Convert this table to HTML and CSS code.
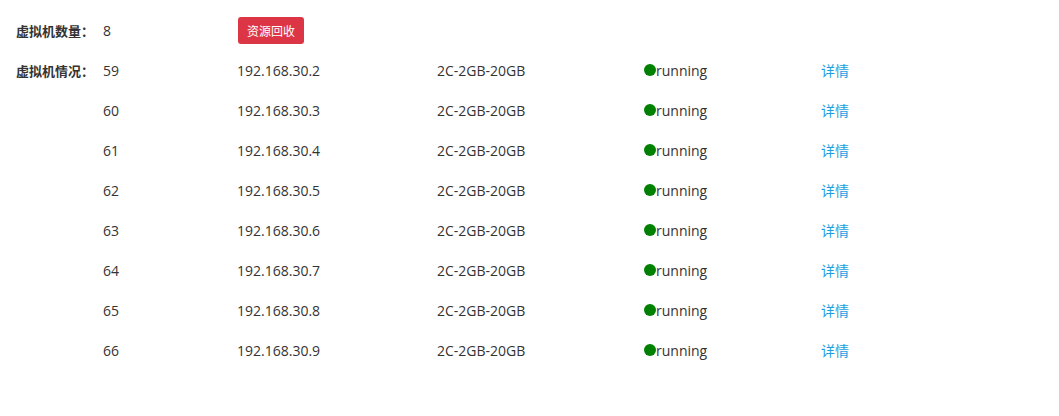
FILE: index.html
```html
<!DOCTYPE html>
<html lang="zh-CN">
<head>
  <meta charset="UTF-8">
  <title>虚拟机</title>
  <link rel="stylesheet" href="styles.css">
</head>
<body>
  <div class="vm-panel">
    <div class="vm-grid">
      <span class="label">虚拟机数量：</span>
      <span>8</span>
      <span class="span-rest"><button class="btn-reclaim">资源回收</button></span>

      <span class="label">虚拟机情况：</span>
      <span>59</span><span>192.168.30.2</span><span>2C-2GB-20GB</span>
      <span class="status"><i class="dot"></i>running</span><a href="#" class="detail">详情</a>

      <span></span>
      <span>60</span><span>192.168.30.3</span><span>2C-2GB-20GB</span>
      <span class="status"><i class="dot"></i>running</span><a href="#" class="detail">详情</a>

      <span></span>
      <span>61</span><span>192.168.30.4</span><span>2C-2GB-20GB</span>
      <span class="status"><i class="dot"></i>running</span><a href="#" class="detail">详情</a>

      <span></span>
      <span>62</span><span>192.168.30.5</span><span>2C-2GB-20GB</span>
      <span class="status"><i class="dot"></i>running</span><a href="#" class="detail">详情</a>

      <span></span>
      <span>63</span><span>192.168.30.6</span><span>2C-2GB-20GB</span>
      <span class="status"><i class="dot"></i>running</span><a href="#" class="detail">详情</a>

      <span></span>
      <span>64</span><span>192.168.30.7</span><span>2C-2GB-20GB</span>
      <span class="status"><i class="dot"></i>running</span><a href="#" class="detail">详情</a>

      <span></span>
      <span>65</span><span>192.168.30.8</span><span>2C-2GB-20GB</span>
      <span class="status"><i class="dot"></i>running</span><a href="#" class="detail">详情</a>

      <span></span>
      <span>66</span><span>192.168.30.9</span><span>2C-2GB-20GB</span>
      <span class="status"><i class="dot"></i>running</span><a href="#" class="detail">详情</a>
    </div>
  </div>
</body>
</html>
```

FILE: styles.css
```css
body {
  margin: 0;
  font-family: "Open Sans", "Noto Sans CJK SC", sans-serif;
  font-size: 14px;
  color: #333;
  background-color: #fff;
}
.vm-panel {
  padding: 10px 0 0 16px;
}
.vm-grid {
  display: grid;
  grid-template-columns: 87px 134px 200px 207px 177px auto;
  grid-auto-rows: 40px;
  align-items: center;
}
.label {
  font-size: 13px;
  font-weight: bold;
  color: #333;
}
.span-rest {
  grid-column: 3 / 7;
}
.btn-reclaim {
  font-family: "Noto Sans CJK SC", sans-serif;
  font-size: 12px;
  color: #fff;
  background-color: #dc3545;
  border: none;
  border-radius: 3px;
  height: 27px;
  margin: 1px 0 0 1px;
  padding: 0 9px;
  cursor: pointer;
}
.status {
  display: flex;
  align-items: center;
}
.dot {
  display: inline-block;
  width: 12px;
  height: 12px;
  border-radius: 50%;
  background-color: #008000;
}
.detail {
  color: #1ba1e2;
  text-decoration: none;
  font-size: 14px;
}
```
